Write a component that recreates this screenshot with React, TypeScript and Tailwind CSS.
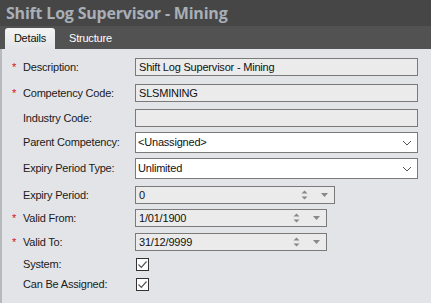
function Star({ show }: { show: boolean }) {
  return (
    <span className="w-[11px] pl-[10px] box-content text-[#d01010] text-[11px] leading-none">
      {show ? "*" : ""}
    </span>
  );
}

function Chevron() {
  return (
    <svg width="10" height="6" viewBox="0 0 10 6" className="mr-[5px]">
      <path d="M1 1l4 4 4-4" fill="none" stroke="#555" strokeWidth="1" />
    </svg>
  );
}

function Spin() {
  return (
    <div className="flex items-center gap-[13px] mr-[6px]">
      <svg width="7" height="12" viewBox="0 0 7 12">
        <path d="M0.5 4.5h6L3.5 1.5z" fill="#888" />
        <path d="M0.5 7.5h6L3.5 10.5z" fill="#888" />
      </svg>
      <svg width="7" height="4" viewBox="0 0 7 4">
        <path d="M0 0h7L3.5 4z" fill="#888" />
      </svg>
    </div>
  );
}

function Check() {
  return (
    <div className="w-[13px] h-[13px] border border-[#333] bg-white flex items-center justify-center">
      <svg width="11" height="11" viewBox="0 0 11 11">
        <path d="M1.5 5.5l2.8 2.8 5.2-5.8" fill="none" stroke="#555" strokeWidth="1.2" />
      </svg>
    </div>
  );
}

type Row = {
  label: string;
  req?: boolean;
  mt: string;
  h: string;
  kind: "ro" | "dd" | "spin" | "cb";
  value?: string;
  w?: string;
};

const rows: Row[] = [
  { label: "Description:", req: true, mt: "mt-[9px]", h: "h-[18px]", kind: "ro", value: "Shift Log Supervisor - Mining" },
  { label: "Competency Code:", req: true, mt: "mt-[8px]", h: "h-[18px]", kind: "ro", value: "SLSMINING" },
  { label: "Industry Code:", mt: "mt-[7px]", h: "h-[18px]", kind: "ro", value: "" },
  { label: "Parent Competency:", mt: "mt-[5px]", h: "h-[21px]", kind: "dd", value: "<Unassigned>" },
  { label: "Expiry Period Type:", mt: "mt-[5px]", h: "h-[21px]", kind: "dd", value: "Unlimited" },
  { label: "Expiry Period:", mt: "mt-[7px]", h: "h-[18px]", kind: "spin", value: "0", w: "w-[200px]" },
  { label: "Valid From:", req: true, mt: "mt-[5px]", h: "h-[18px]", kind: "spin", value: "1/01/1900", w: "w-[192px]" },
  { label: "Valid To:", req: true, mt: "mt-[6px]", h: "h-[18px]", kind: "spin", value: "31/12/9999", w: "w-[192px]" },
  { label: "System:", mt: "mt-[7px]", h: "h-[13px]", kind: "cb" },
  { label: "Can Be Assigned:", mt: "mt-[7px]", h: "h-[13px]", kind: "cb" },
];

export default function App() {
  return (
    <div className="w-[431px] h-[303px] flex flex-col bg-[#e3e4e8] overflow-hidden font-['Liberation_Sans',Arial,sans-serif] text-[11px] tracking-[-0.2px]">
      <div className="h-[26px] bg-[#464646] flex items-center pl-[6px] shrink-0">
        <span className="font-['Open_Sans',sans-serif] font-bold text-[16px] tracking-[-0.2px] text-[#a8afb7] leading-none">
          Shift Log Supervisor - Mining
        </span>
      </div>
      <div className="h-[23px] bg-[#525252] flex items-end pl-[5px] shrink-0">
        <div className="h-[21px] w-[50px] rounded-t-[3px] bg-gradient-to-b from-[#f4f4f4] to-[#e3e4e8] flex items-center justify-center text-[#111]">
          Details
        </div>
        <div className="h-[21px] flex items-center pl-[14px] text-white">Structure</div>
      </div>
      <div className="flex-1 border-l-2 border-[#b8b9bd] flex flex-col">
        {rows.map((r) => (
          <div key={r.label} className={`flex items-center ${r.mt} ${r.h}`}>
            <div className="w-[133px] flex items-center text-[#1a1a1a] leading-none">
              <Star show={!!r.req} />
              <span>{r.label}</span>
            </div>
            {r.kind === "ro" && (
              <div className="w-[283px] h-full border border-[#7a7a7a] bg-[#ebebeb] flex items-center pl-[3px] text-[#111]">
                {r.value}
              </div>
            )}
            {r.kind === "dd" && (
              <div className="w-[283px] h-full border border-[#7a7a7a] bg-white flex items-center justify-between pl-[2px] text-[#111]">
                <span>{r.value}</span>
                <Chevron />
              </div>
            )}
            {r.kind === "spin" && (
              <div className={`${r.w} h-full border border-[#7a7a7a] bg-[#ebebeb] flex items-center justify-between pl-[3px] text-[#111]`}>
                <span>{r.value}</span>
                <Spin />
              </div>
            )}
            {r.kind === "cb" && (
              <div className="pl-[1px]">
                <Check />
              </div>
            )}
          </div>
        ))}
      </div>
    </div>
  );
}
